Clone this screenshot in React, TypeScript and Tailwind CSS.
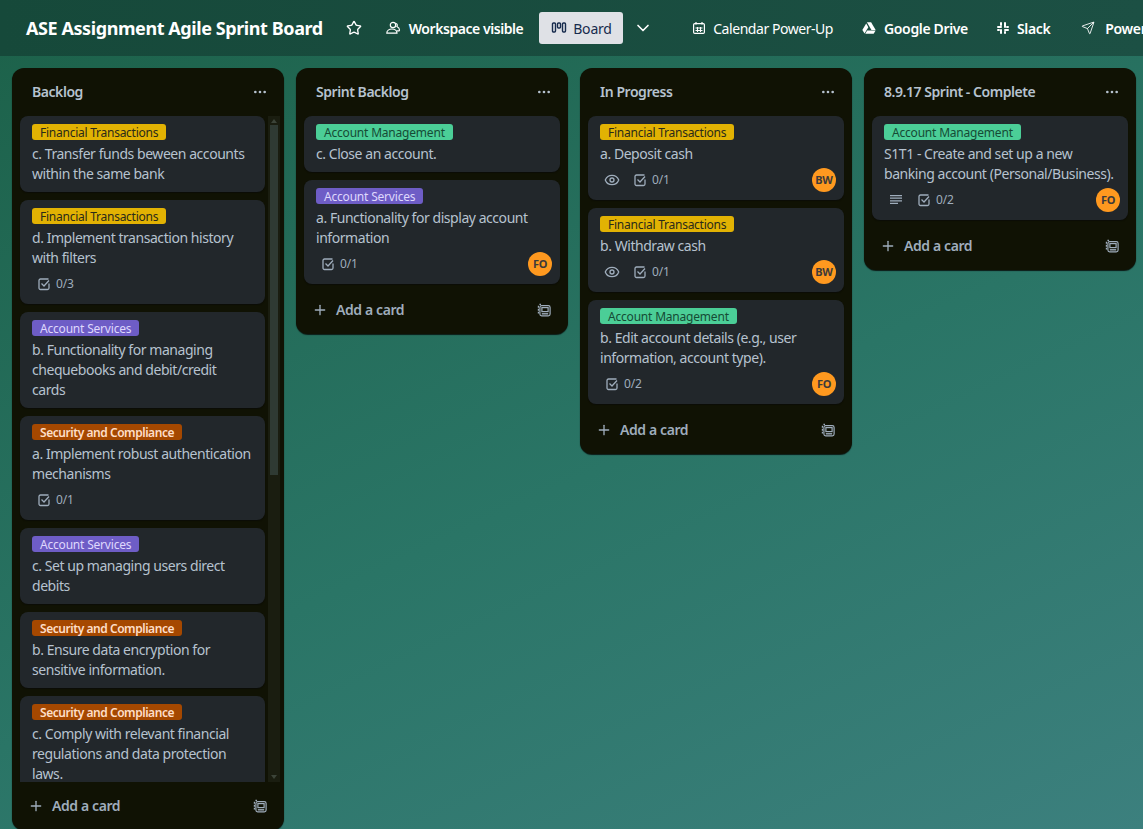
import React from 'react';
import { ChevronDown, Ellipsis, Eye, Plus, Send, Star } from 'lucide-react';

const labelStyles: Record<string, string> = {
  'Financial Transactions': 'bg-[#e2b203] text-[#2a2a1a] tracking-[-0.25px]',
  'Account Management': 'bg-[#4bce97] text-[#164b35] tracking-[-0.2px]',
  'Account Services': 'bg-[#6e5dc6] text-[#dfd8fd] tracking-[-0.2px]',
  'Security and Compliance': 'bg-[#a54800] text-[#fedec8] font-semibold tracking-[-0.45px]',
};

type CardData = {
  label: string;
  lines: string[];
  eye?: boolean;
  desc?: boolean;
  check?: string;
  member?: string;
};

const CheckIcon = () => (
  <svg width="16" height="16" viewBox="0 0 16 16" fill="none" stroke="#9fadbc" strokeWidth="1.3" className="shrink-0">
    <path d="M13 7.5V12a1.5 1.5 0 0 1-1.5 1.5h-7A1.5 1.5 0 0 1 3 12V4.5A1.5 1.5 0 0 1 4.5 3h8" />
    <path d="M5.5 7.5 8 10l5-5.5" />
  </svg>
);

const DescIcon = () => (
  <svg width="16" height="16" viewBox="0 0 16 16" fill="none" stroke="#9fadbc" strokeWidth="1.2" className="ml-1 mr-2 shrink-0">
    <path d="M2 3.6h12M2 6.2h12M2 8.8h12M2 11.4h8" />
  </svg>
);

const Card = ({ card }: { card: CardData }) => (
  <div className="rounded-lg bg-[#22272b] px-3 pt-2 pb-2 shadow-[0_1px_1px_#0c0d07]">
    <div className={`flex h-4 w-fit items-center rounded-[3px] px-2 pt-[2px] text-[12px] leading-4 ${labelStyles[card.label]}`}>
      {card.label}
    </div>
    <div className="mt-1 text-[14px] leading-5 tracking-[-0.45px] text-[#b6c2cf]">
      {card.lines.map((line) => (
        <div key={line} className="whitespace-nowrap">{line}</div>
      ))}
    </div>
    {(card.check || card.member) && (
      <div className="mt-1 -mr-1 flex h-6 items-center text-[#9fadbc]">
        {card.eye && <Eye size={16} className="ml-1 mr-2 shrink-0" />}
        {card.desc && <DescIcon />}
        {card.check && (
          <div className="ml-1 flex items-center gap-1 text-[12px] tracking-[-0.2px]">
            <CheckIcon />
            {card.check}
          </div>
        )}
        {card.member && (
          <div className="ml-auto flex h-6 w-6 items-center justify-center rounded-full bg-[#ff991f] text-[11px] font-bold tracking-[-0.3px] text-[#3d3a3a]">
            {card.member}
          </div>
        )}
      </div>
    )}
  </div>
);

const TemplateIcon = () => (
  <svg width="16" height="16" viewBox="0 0 16 16" fill="none" stroke="#9fadbc" strokeWidth="1.2">
    <path d="M3.4 2.4H5M2.4 3.8v7.6" strokeDasharray="2 1" />
    <rect x="3.9" y="3.6" width="10.2" height="10.2" rx="1.8" />
    <rect x="5.9" y="5.6" width="6.2" height="4" />
    <path d="M5.8 11.8h6.4" strokeWidth="1.4" />
  </svg>
);

const Column = ({ title, cards, scroll }: { title: string; cards: CardData[]; scroll?: boolean }) => (
  <div className="flex h-fit w-[272px] shrink-0 flex-col rounded-xl bg-[#101204] shadow-[0_1px_1px_#0c1a16]">
    <div className="flex h-12 items-center justify-between pb-px pl-5 pr-4">
      <span className="whitespace-nowrap text-[14px] font-semibold tracking-[-0.45px] text-[#b6c2cf]">{title}</span>
      <Ellipsis size={16} className="text-[#b6c2cf]" />
    </div>
    {scroll ? (
      <div className="flex h-[666px] overflow-hidden pl-2 pr-1">
        <div className="flex w-[245px] shrink-0 flex-col gap-2">
          {cards.map((card) => (
            <Card key={card.lines[0]} card={card} />
          ))}
        </div>
        <div className="ml-[3px] flex w-3 flex-col items-center bg-[#1a1d10] text-[#56604f]">
          <div className="mt-[3px] h-0 w-0 border-x-[3px] border-b-[4px] border-x-transparent border-b-[#3c4439]" />
          <div className="mt-[2px] h-[350px] w-2 bg-[#2f3a33]" />
          <div className="mt-auto mb-[3px] h-0 w-0 border-x-[3px] border-t-[4px] border-x-transparent border-t-[#3c4439]" />
        </div>
      </div>
    ) : (
      <div className="flex flex-col gap-2 px-2 pb-0.5">
        {cards.map((card) => (
          <Card key={card.lines[0]} card={card} />
        ))}
      </div>
    )}
    <div className="flex items-center justify-between pl-4 pr-4 pt-2 pb-2">
      <div className="flex h-8 items-center gap-2 pb-px text-[14px] font-semibold tracking-[-0.4px] text-[#9fadbc]">
        <Plus size={16} />
        Add a card
      </div>
      <TemplateIcon />
    </div>
  </div>
);

const backlog: CardData[] = [
  { label: 'Financial Transactions', lines: ['c. Transfer funds beween accounts', 'within the same bank'] },
  { label: 'Financial Transactions', lines: ['d. Implement transaction history', 'with filters'], check: '0/3' },
  { label: 'Account Services', lines: ['b. Functionality for managing', 'chequebooks and debit/credit', 'cards'] },
  { label: 'Security and Compliance', lines: ['a. Implement robust authentication', 'mechanisms'], check: '0/1' },
  { label: 'Account Services', lines: ['c. Set up managing users direct', 'debits'] },
  { label: 'Security and Compliance', lines: ['b. Ensure data encryption for', 'sensitive information.'] },
  { label: 'Security and Compliance', lines: ['c. Comply with relevant financial', 'regulations and data protection', 'laws.'] },
];

const sprintBacklog: CardData[] = [
  { label: 'Account Management', lines: ['c. Close an account.'] },
  { label: 'Account Services', lines: ['a. Functionality for display account', 'information'], check: '0/1', member: 'FO' },
];

const inProgress: CardData[] = [
  { label: 'Financial Transactions', lines: ['a. Deposit cash'], eye: true, check: '0/1', member: 'BW' },
  { label: 'Financial Transactions', lines: ['b. Withdraw cash'], eye: true, check: '0/1', member: 'BW' },
  { label: 'Account Management', lines: ['b. Edit account details (e.g., user', 'information, account type).'], check: '0/2', member: 'FO' },
];

const complete: CardData[] = [
  { label: 'Account Management', lines: ['S1T1 - Create and set up a new', 'banking account (Personal/Business).'], desc: true, check: '0/2', member: 'FO' },
];

export default function App() {
  return (
    <div className="flex h-[829px] w-[1143px] flex-col overflow-hidden bg-[linear-gradient(155deg,#1c6149_0%,#2a7566_55%,#3c807e_100%)] font-['Noto_Sans',sans-serif]">
      <header className="flex h-14 shrink-0 items-center gap-0 overflow-hidden whitespace-nowrap bg-[linear-gradient(90deg,#16493a,#1c5044)] pl-[26px] text-white">
        <h1 className="shrink-0 text-[18px] font-bold tracking-[-0.42px]">ASE Assignment Agile Sprint Board</h1>
        <Star size={16} className="ml-[23px] shrink-0" />
        <div className="ml-[23px] flex shrink-0 items-center gap-2 text-[14px] font-semibold tracking-[-0.45px]">
          <svg width="16" height="16" viewBox="0 0 16 16" fill="none" stroke="white" strokeWidth="1.2">
            <circle cx="8" cy="5" r="2.7" />
            <path d="M11 3.5c1.3.3 1.6 1.8.9 3 1.6.8 2.6 2 2.6 3.5 0 .6-.3.9-.9.9h-2" />
            <path d="M1.8 13.2c0-2.4 2.3-4.2 5.2-4.2s5 1.8 5 4.2z" />
          </svg>
          Workspace visible
        </div>
        <div className="ml-4 flex h-8 w-[84px] shrink-0 items-center gap-[6px] rounded-[3px] bg-[#dfe1e6] pl-[12px] text-[14px] tracking-[-0.2px] text-[#172b4d]">
          <svg width="16" height="16" viewBox="0 0 16 16" fill="none" stroke="#172b4d" strokeWidth="1.4">
            <rect x="1.5" y="3" width="3" height="9" rx="1" />
            <rect x="6.5" y="3" width="3" height="5" rx="1" />
            <rect x="11.5" y="3" width="3" height="9" rx="1" />
          </svg>
          Board
        </div>
        <ChevronDown size={20} className="ml-[10px] shrink-0" />
        <div className="ml-[39px] flex shrink-0 items-center gap-[7px] text-[14px] tracking-[-0.45px]">
          <svg width="14" height="14" viewBox="0 0 14 14" fill="none" stroke="white" strokeWidth="1.2">
            <rect x="1.6" y="2.6" width="10.8" height="9.8" rx="1.2" />
            <path d="M4 1v2.5M10 1v2.5" />
            <path d="M3.5 7h7M3.5 9.5h7M5.5 6v5M8.5 6v5" strokeWidth="1.1" />
          </svg>
          Calendar Power-Up
        </div>
        <div className="ml-[29px] flex shrink-0 items-center gap-2 text-[14px] font-semibold tracking-[-0.35px]">
          <svg width="14" height="14" viewBox="0 0 16 16" fill="white">
            <path d="M5.6 1.5h4.8L15.6 10.4h-4.8z" />
            <path d="M4.8 2.9 7.2 7 2.9 14.3.4 10.2z" />
            <path d="M5.9 10.9h9.7l-2.3 3.6H3.7z" />
          </svg>
          Google Drive
        </div>
        <div className="ml-[28px] flex shrink-0 items-center gap-[7px] text-[14px] font-semibold tracking-[-0.35px]">
          <svg width="14" height="14" viewBox="0 0 14 14" fill="white">
            <rect x="1" y="5" width="5" height="2" rx="1" />
            <rect x="4" y="1" width="2" height="4" rx="1" />
            <rect x="8" y="1" width="2" height="6" rx="1" />
            <rect x="10" y="5" width="3" height="2" rx="1" />
            <rect x="1" y="8" width="3" height="2" rx="1" />
            <rect x="4" y="8" width="2" height="5" rx="1" />
            <rect x="8" y="8" width="5" height="2" rx="1" />
            <rect x="8" y="10" width="2" height="3" rx="1" />
          </svg>
          Slack
        </div>
        <div className="ml-[31px] flex shrink-0 items-center gap-[10px] text-[14px] font-semibold tracking-[-0.35px]">
          <Send size={14} strokeWidth={1.5} />
          Power-Ups
        </div>
      </header>
      <main className="flex items-start gap-3 pl-3 pt-3">
        <Column title="Backlog" cards={backlog} scroll />
        <Column title="Sprint Backlog" cards={sprintBacklog} />
        <Column title="In Progress" cards={inProgress} />
        <Column title="8.9.17 Sprint - Complete" cards={complete} />
      </main>
    </div>
  );
}
